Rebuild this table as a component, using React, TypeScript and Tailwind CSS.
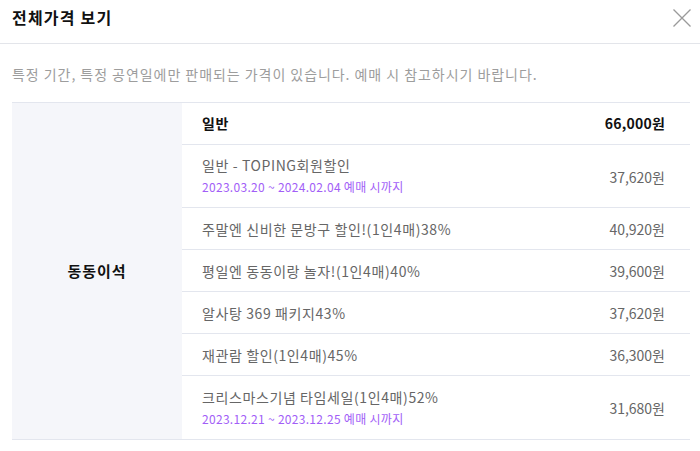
const font = { fontFamily: "'Noto Sans CJK KR', 'Noto Sans', sans-serif" }

type Row = { name: string; price: string; period?: string }

const rows: Row[] = [
  { name: "일반 - TOPING회원할인", price: "37,620원", period: "2023.03.20 ~ 2024.02.04" },
  { name: "주말엔 신비한 문방구 할인!(1인4매)38%", price: "40,920원" },
  { name: "평일엔 동동이랑 놀자!(1인4매)40%", price: "39,600원" },
  { name: "알사탕 369 패키지43%", price: "37,620원" },
  { name: "재관람 할인(1인4매)45%", price: "36,300원" },
  { name: "크리스마스기념 타임세일(1인4매)52%", price: "31,680원", period: "2023.12.21 ~ 2023.12.25" },
]

export default function App() {
  return (
    <div className="w-[700px] h-[451px] bg-white overflow-hidden" style={font}>
      {/* Header */}
      <div className="h-[44px] flex items-center justify-between pl-3 pr-[9px] border-b border-[#e3e5ea]">
        <h2 className="text-[16px] font-bold text-[#111] tracking-[1.2px] -mt-[9px]">전체가격 보기</h2>
        <button className="w-[18px] h-[18px] -mt-[8px]">
          <svg width="18" height="18" viewBox="0 0 18 18" fill="none" stroke="#9a9a9a" strokeWidth="1.3">
            <path d="M0.5 0.5 L17.5 17.5 M17.5 0.5 L0.5 17.5" />
          </svg>
        </button>
      </div>

      {/* Notice */}
      <p className="px-3 pt-[19px] pb-[17px] text-[14px] leading-[22px] text-[#9d9d9d] tracking-[0.95px]">
        특정 기간, 특정 공연일에만 판매되는 가격이 있습니다. 예매 시 참고하시기 바랍니다.
      </p>

      {/* Table */}
      <div className="ml-3 mr-[10px] flex border-t border-b border-[#e3e6ee]">
        <div className="w-[170px] bg-[#f5f6fa] flex items-center justify-center">
          <span className="text-[15px] font-bold text-[#111] tracking-[1px]">동동이석</span>
        </div>
        <div className="flex-1">
          <div className="h-[42px] flex items-center justify-between pl-5 pr-[25px] border-b border-[#e3e6ee]">
            <span className="text-[14px] font-bold text-[#111] tracking-[0.6px]">일반</span>
            <span className="text-[14px] font-bold text-[#111] tracking-[0.2px]">66,000원</span>
          </div>
          {rows.map((r, i) => (
            <div
              key={i}
              className={
                "flex items-center justify-between pl-5 pr-[25px] " +
                (r.period ? "h-[63px] " : "h-[42px] ") +
                (i < rows.length - 1 ? "border-b border-[#e3e6ee]" : "")
              }
            >
              <div className="flex flex-col">
                <span className="text-[14px] leading-[22px] text-[#666] tracking-[0.6px]">{r.name}</span>
                {r.period && (
                  <span className="text-[12px] leading-[22px] text-[#a25ef7] tracking-[0.3px]">
                    {r.period} 예매 시까지
                  </span>
                )}
              </div>
              <span className="text-[14px] text-[#666] mt-[2px]">{r.price}</span>
            </div>
          ))}
        </div>
      </div>
    </div>
  )
}
